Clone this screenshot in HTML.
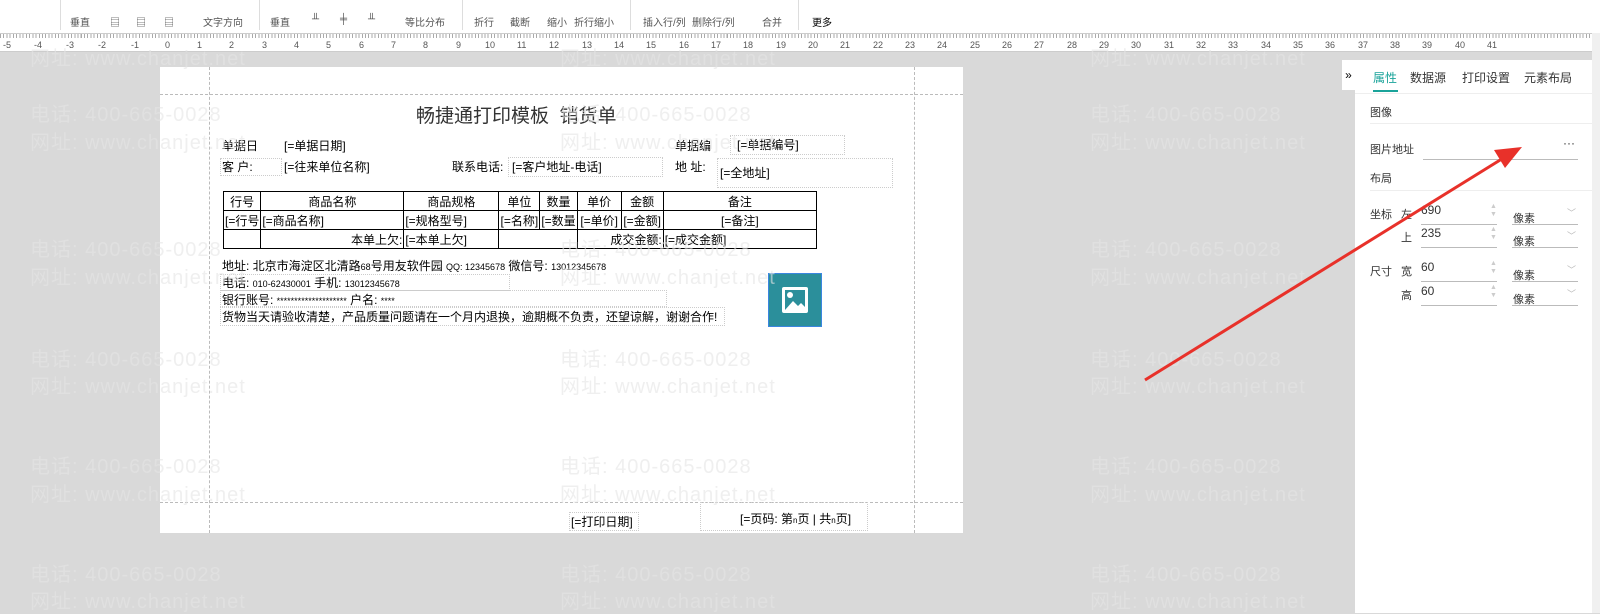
<!DOCTYPE html>
<html><head><meta charset="utf-8"><style>
*{margin:0;padding:0;box-sizing:border-box}
body{width:1600px;height:613px;overflow:hidden;background:#d9d9d9;font-family:"Liberation Sans","Noto Sans CJK SC",sans-serif;position:relative;color:#000}
.abs{position:absolute}
#tb{left:0;top:0;width:1600px;height:33px;background:#fff}
.tl{position:absolute;top:14px;font-size:10px;color:#555;white-space:nowrap}
.sep{position:absolute;top:0;width:1px;height:30px;background:#ddd}
#ruler{left:0;top:33px;width:1600px;height:19px;background:#fff;border-top:1px solid #ccc;border-bottom:1px solid #ccc;
background-image:repeating-linear-gradient(90deg,#aaa 0 1px,transparent 1px 3.23px);background-size:100% 4px;background-repeat:repeat-x;background-position:0 0}
.rn{position:absolute;top:6px;font-size:9px;color:#555}
#page{left:160px;top:67px;width:803px;height:466px;background:#fff}
.dv{position:absolute;border-left:1px dashed #bbb}
.dh{position:absolute;border-top:1px dashed #bbb}
.t{position:absolute;font-size:12px;white-space:nowrap;line-height:14px}
.box{position:absolute;border:1px dotted #ccc}
table{position:absolute;border-collapse:collapse;font-size:12px}
td{border:1px solid #000;height:19px;padding:0 1px;text-align:center;white-space:nowrap;overflow:hidden}
.wm{position:absolute;font-size:20px;color:rgba(228,228,228,0.6);white-space:nowrap;z-index:5;pointer-events:none;letter-spacing:1px}
#panel{left:1355px;top:60px;width:237px;height:553px;background:#fff}
#tog{left:1342px;top:60px;width:13px;height:30px;background:#fff;font-size:12px;text-align:center;line-height:30px}
.pl{position:absolute;font-size:11px;color:#333;white-space:nowrap}
.ul{position:absolute;height:1px;background:#bbb}
.sp{position:absolute;font-size:7px;color:#ccc;line-height:8px}
.dd{position:absolute;font-size:9px;color:#bbb}
</style></head><body>
<div id="tb" class="abs">
 <div class="tl" style="left:70px">垂直</div><div class="tl" style="left:110px">▤</div><div class="tl" style="left:136px">▤</div><div class="tl" style="left:164px">▤</div><div class="tl" style="left:203px">文字方向</div>
 <div class="sep" style="left:60px"></div><div class="sep" style="left:259px"></div>
 <div class="tl" style="left:270px">垂直</div><div class="tl" style="left:312px">╨</div><div class="tl" style="left:340px">╪</div><div class="tl" style="left:368px">╨</div><div class="tl" style="left:405px">等比分布</div>
 <div class="sep" style="left:462px"></div>
 <div class="tl" style="left:474px">折行</div><div class="tl" style="left:510px">截断</div><div class="tl" style="left:547px">缩小</div><div class="tl" style="left:574px">折行缩小</div>
 <div class="sep" style="left:630px"></div>
 <div class="tl" style="left:643px">插入行/列</div><div class="tl" style="left:692px">删除行/列</div><div class="tl" style="left:762px">合并</div>
 <div class="sep" style="left:798px"></div>
 <div class="tl" style="left:812px;color:#000">更多</div>
</div>
<div id="ruler" class="abs">
<span class="rn" style="left:3px">-5</span><span class="rn" style="left:34px">-4</span><span class="rn" style="left:66px">-3</span><span class="rn" style="left:98px">-2</span><span class="rn" style="left:131px">-1</span><span class="rn" style="left:165px">0</span><span class="rn" style="left:197px">1</span><span class="rn" style="left:229px">2</span><span class="rn" style="left:262px">3</span><span class="rn" style="left:294px">4</span><span class="rn" style="left:326px">5</span><span class="rn" style="left:359px">6</span><span class="rn" style="left:391px">7</span><span class="rn" style="left:423px">8</span><span class="rn" style="left:456px">9</span><span class="rn" style="left:485px">10</span><span class="rn" style="left:517px">11</span><span class="rn" style="left:549px">12</span><span class="rn" style="left:582px">13</span><span class="rn" style="left:614px">14</span><span class="rn" style="left:646px">15</span><span class="rn" style="left:679px">16</span><span class="rn" style="left:711px">17</span><span class="rn" style="left:743px">18</span><span class="rn" style="left:776px">19</span><span class="rn" style="left:808px">20</span><span class="rn" style="left:840px">21</span><span class="rn" style="left:873px">22</span><span class="rn" style="left:905px">23</span><span class="rn" style="left:937px">24</span><span class="rn" style="left:970px">25</span><span class="rn" style="left:1002px">26</span><span class="rn" style="left:1034px">27</span><span class="rn" style="left:1067px">28</span><span class="rn" style="left:1099px">29</span><span class="rn" style="left:1131px">30</span><span class="rn" style="left:1164px">31</span><span class="rn" style="left:1196px">32</span><span class="rn" style="left:1228px">33</span><span class="rn" style="left:1261px">34</span><span class="rn" style="left:1293px">35</span><span class="rn" style="left:1325px">36</span><span class="rn" style="left:1358px">37</span><span class="rn" style="left:1390px">38</span><span class="rn" style="left:1422px">39</span><span class="rn" style="left:1455px">40</span><span class="rn" style="left:1487px">41</span>
</div>
<div class="abs" style="left:1592px;top:33px;width:8px;height:580px;background:#f0f0f0"></div>

<div id="page" class="abs">
 <div class="dv" style="left:49px;top:0;height:466px"></div>
 <div class="dv" style="left:754px;top:0;height:466px"></div>
 <div class="dh" style="left:0;top:27px;width:803px"></div>
 <div class="dh" style="left:0;top:435px;width:803px"></div>
 <div class="t" style="left:256px;top:39px;font-size:19px;line-height:22px;color:#333">畅捷通打印模板&nbsp; 销货单</div>
 <div class="t" style="left:62px;top:72px">单据日</div>
 <div class="t" style="left:124px;top:72px">[=单据日期]</div>
 <div class="t" style="left:515px;top:72px">单据编</div>
 <div class="box" style="left:570px;top:68px;width:115px;height:20px"></div>
 <div class="t" style="left:577px;top:71px">[=单据编号]</div>
 <div class="box" style="left:60px;top:91px;width:62px;height:18px"></div>
 <div class="t" style="left:62px;top:93px">客 户:</div>
 <div class="t" style="left:124px;top:93px">[=往来单位名称]</div>
 <div class="t" style="left:292px;top:93px">联系电话:</div>
 <div class="box" style="left:348px;top:90px;width:155px;height:20px"></div>
 <div class="t" style="left:352px;top:93px">[=客户地址-电话]</div>
 <div class="t" style="left:515px;top:93px">地 址:</div>
 <div class="box" style="left:557px;top:91px;width:176px;height:30px"></div>
 <div class="t" style="left:560px;top:99px">[=全地址]</div>
 <table style="left:63px;top:124px;width:594px">
  <tr><td style="width:31px">行号</td><td style="width:143px">商品名称</td><td style="width:95px">商品规格</td><td style="width:41px">单位</td><td style="width:32px">数量</td><td style="width:44px">单价</td><td style="width:42px">金额</td><td>备注</td></tr>
  <tr><td style="text-align:left">[=行号</td><td style="text-align:left">[=商品名称]</td><td style="text-align:left">[=规格型号]</td><td>[=名称]</td><td style="text-align:left">[=数量</td><td>[=单价]</td><td>[=金额]</td><td>[=备注]</td></tr>
  <tr><td></td><td style="text-align:right">本单上欠:</td><td style="text-align:left">[=本单上欠]</td><td colspan="2" style="border-right:1px solid #000"></td><td colspan="2" style="text-align:right">成交金额:</td><td style="text-align:left">[=成交金额]</td></tr>
 </table>
 <div class="t" style="left:62px;top:192px">地址: 北京市海淀区北清路<span style="font-size:9px">68</span>号用友软件园 <span style="font-size:9px">QQ: 12345678</span> 微信号: <span style="font-size:9px">13012345678</span></div>
 <div class="box" style="left:60px;top:207px;width:290px;height:17px"></div>
 <div class="t" style="left:62px;top:209px">电话: <span style="font-size:9px">010-62430001</span> 手机: <span style="font-size:9px">13012345678</span></div>
 <div class="box" style="left:60px;top:223px;width:447px;height:17px"></div>
 <div class="t" style="left:62px;top:226px">银行账号: <span style="font-size:9px">********************</span> 户名: <span style="font-size:9px">****</span></div>
 <div class="box" style="left:60px;top:240px;width:505px;height:19px"></div>
 <div class="t" style="left:62px;top:243px">货物当天请验收清楚，产品质量问题请在一个月内退换，逾期概不负责，还望谅解，谢谢合作!</div>
 <div class="abs" style="left:608px;top:206px;width:54px;height:54px;background:#2b8f9b;border:1px solid #3a86e0">
  <svg width="52" height="52" viewBox="0 0 52 52" style="position:absolute;left:0;top:0"><rect x="13" y="13" width="26" height="26" rx="2" fill="#fff"/><rect x="16" y="16" width="20" height="20" fill="#2b8f9b"/><circle cx="21" cy="21" r="3" fill="#fff"/><path d="M16 36 L24 27 L29 32 L32 29 L36 33 L36 36Z" fill="#fff"/></svg>
 </div>
 <div class="box" style="left:409px;top:445px;width:70px;height:19px"></div>
 <div class="t" style="left:411px;top:448px">[=打印日期]</div>
 <div class="box" style="left:540px;top:435px;width:168px;height:29px"></div>
 <div class="t" style="left:580px;top:445px">[=页码: 第<span style="font-size:8px">n</span>页 | 共<span style="font-size:8px">n</span>页]</div>
</div>

<div id="tog" class="abs">»</div>
<div id="panel" class="abs">
 <div class="pl" style="left:18px;top:9px;font-size:12px;color:#1aa39a">属性</div>
 <div class="abs" style="left:18px;top:30px;width:25px;height:2px;background:#1aa39a"></div>
 <div class="pl" style="left:55px;top:9px;font-size:12px">数据源</div>
 <div class="pl" style="left:107px;top:9px;font-size:12px">打印设置</div>
 <div class="pl" style="left:169px;top:9px;font-size:12px">元素布局</div>
 <div class="ul" style="left:0;top:33px;width:237px;background:#eee"></div>
 <div class="pl" style="left:15px;top:44px">图像</div>
 <div class="ul" style="left:15px;top:63px;width:222px;background:#eee"></div>
 <div class="pl" style="left:15px;top:81px">图片地址</div>
 <div class="pl" style="left:208px;top:76px;font-size:12px">···</div>
 <div class="ul" style="left:68px;top:99px;width:155px"></div>
 <div class="pl" style="left:15px;top:110px">布局</div>
 <div class="ul" style="left:15px;top:130px;width:222px;background:#eee"></div>
 <div class="pl" style="left:15px;top:146px">坐标</div><div class="pl" style="left:46px;top:146px">左</div><div class="pl" style="left:66px;top:143px;font-size:12px">690</div>
 <div class="sp" style="left:135px;top:143px">▲<br>▼</div>
 <div class="ul" style="left:66px;top:164px;width:76px"></div><div class="pl" style="left:158px;top:150px">像素</div><div class="dd" style="left:212px;top:146px">﹀</div><div class="ul" style="left:157px;top:164px;width:66px"></div>
 <div class="pl" style="left:46px;top:169px">上</div><div class="pl" style="left:66px;top:166px;font-size:12px">235</div>
 <div class="sp" style="left:135px;top:166px">▲<br>▼</div>
 <div class="ul" style="left:66px;top:187px;width:76px"></div><div class="pl" style="left:158px;top:173px">像素</div><div class="dd" style="left:212px;top:169px">﹀</div><div class="ul" style="left:157px;top:187px;width:66px"></div>
 <div class="pl" style="left:15px;top:203px">尺寸</div><div class="pl" style="left:46px;top:203px">宽</div><div class="pl" style="left:66px;top:200px;font-size:12px">60</div>
 <div class="sp" style="left:135px;top:200px">▲<br>▼</div>
 <div class="ul" style="left:66px;top:221px;width:76px"></div><div class="pl" style="left:158px;top:207px">像素</div><div class="dd" style="left:212px;top:203px">﹀</div><div class="ul" style="left:157px;top:221px;width:66px"></div>
 <div class="pl" style="left:46px;top:227px">高</div><div class="pl" style="left:66px;top:224px;font-size:12px">60</div>
 <div class="sp" style="left:135px;top:224px">▲<br>▼</div>
 <div class="ul" style="left:66px;top:245px;width:76px"></div><div class="pl" style="left:158px;top:231px">像素</div><div class="dd" style="left:212px;top:227px">﹀</div><div class="ul" style="left:157px;top:245px;width:66px"></div>
</div>

<div class="wm" style="left:30px;top:42px">网址: www.chanjet.net</div><div class="wm" style="left:560px;top:42px">网址: www.chanjet.net</div><div class="wm" style="left:1090px;top:42px">网址: www.chanjet.net</div>
<div class="wm" style="left:30px;top:98px">电话: 400-665-0028</div><div class="wm" style="left:560px;top:98px">电话: 400-665-0028</div><div class="wm" style="left:1090px;top:98px">电话: 400-665-0028</div>
<div class="wm" style="left:30px;top:126px">网址: www.chanjet.net</div><div class="wm" style="left:560px;top:126px">网址: www.chanjet.net</div><div class="wm" style="left:1090px;top:126px">网址: www.chanjet.net</div>
<div class="wm" style="left:30px;top:233px">电话: 400-665-0028</div><div class="wm" style="left:560px;top:233px">电话: 400-665-0028</div><div class="wm" style="left:1090px;top:233px">电话: 400-665-0028</div>
<div class="wm" style="left:30px;top:261px">网址: www.chanjet.net</div><div class="wm" style="left:560px;top:261px">网址: www.chanjet.net</div><div class="wm" style="left:1090px;top:261px">网址: www.chanjet.net</div>
<div class="wm" style="left:30px;top:343px">电话: 400-665-0028</div><div class="wm" style="left:560px;top:343px">电话: 400-665-0028</div><div class="wm" style="left:1090px;top:343px">电话: 400-665-0028</div>
<div class="wm" style="left:30px;top:370px">网址: www.chanjet.net</div><div class="wm" style="left:560px;top:370px">网址: www.chanjet.net</div><div class="wm" style="left:1090px;top:370px">网址: www.chanjet.net</div>
<div class="wm" style="left:30px;top:450px">电话: 400-665-0028</div><div class="wm" style="left:560px;top:450px">电话: 400-665-0028</div><div class="wm" style="left:1090px;top:450px">电话: 400-665-0028</div>
<div class="wm" style="left:30px;top:478px">网址: www.chanjet.net</div><div class="wm" style="left:560px;top:478px">网址: www.chanjet.net</div><div class="wm" style="left:1090px;top:478px">网址: www.chanjet.net</div>
<div class="wm" style="left:30px;top:558px">电话: 400-665-0028</div><div class="wm" style="left:560px;top:558px">电话: 400-665-0028</div><div class="wm" style="left:1090px;top:558px">电话: 400-665-0028</div>
<div class="wm" style="left:30px;top:585px">网址: www.chanjet.net</div><div class="wm" style="left:560px;top:585px">网址: www.chanjet.net</div><div class="wm" style="left:1090px;top:585px">网址: www.chanjet.net</div>

<svg class="abs" style="left:0;top:0;z-index:10" width="1600" height="613"><line x1="1145" y1="380" x2="1505" y2="157" stroke="#e8312a" stroke-width="3"/><polygon points="1522,147 1494,150 1505,168" fill="#e8312a"/></svg>
</body></html>
